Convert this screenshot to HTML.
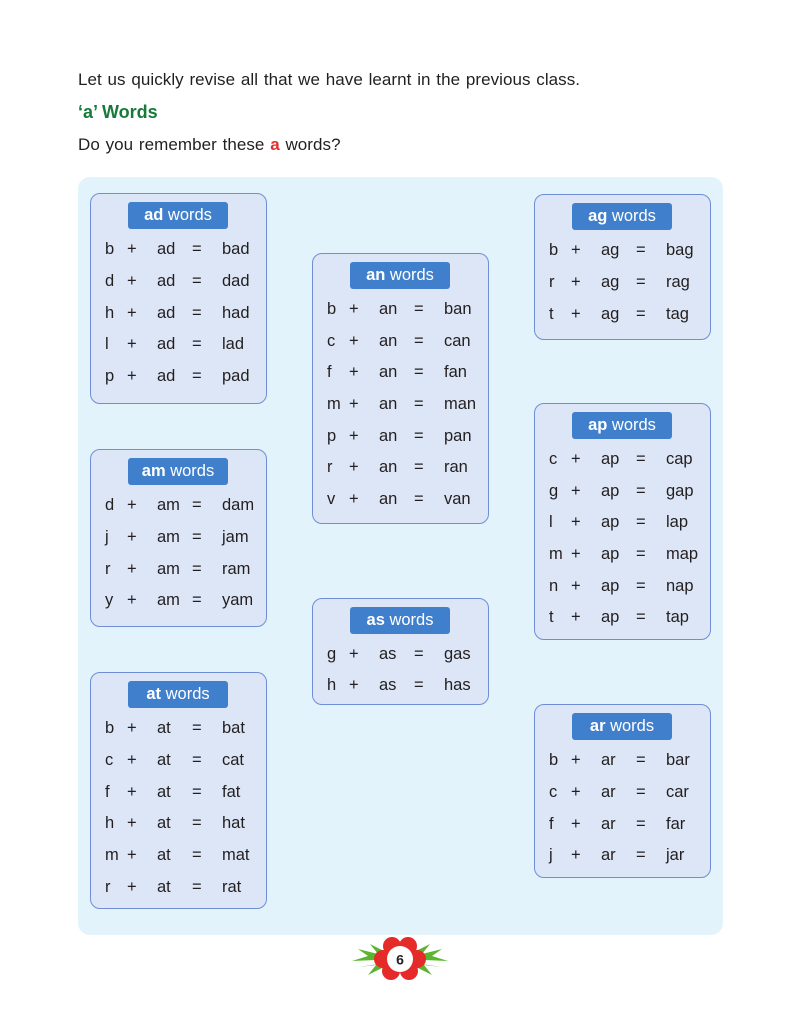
<!DOCTYPE html>
<html><head><meta charset="utf-8"><style>
*{margin:0;padding:0;box-sizing:border-box}
body{width:800px;height:1024px;background:#fff;font-family:"Liberation Sans",sans-serif;color:#231f20;position:relative;overflow:hidden}
.t{position:absolute;left:78px;font-size:17px;white-space:nowrap}
.panel{position:absolute;left:78px;top:177px;width:645px;height:758px;background:#e2f3fb;border-radius:12px}
.box{position:absolute;width:177px;background:#dce6f6;border:1.3px solid #6f8ed6;border-radius:10px}
.lab{position:absolute;left:37px;width:100px;height:27px;top:8px;background:#3f7fcc;color:#fff;border-radius:3px;text-align:center;font-size:16.5px;line-height:27px}
.lab b{font-weight:bold}
.r{position:absolute;left:0;width:100%;height:20px;font-size:16.5px;line-height:20px}
.r span{position:absolute}
.a{left:14px}.p{left:36px}.s{left:66px}.e{left:101px}.w{left:131px}
</style></head><body>
<div class="t" style="top:70px;letter-spacing:0.05px;word-spacing:1px">Let us quickly revise all that we have learnt in the previous class.</div>
<div class="t" style="top:102px;color:#167a3a;font-weight:bold;font-size:18px">‘a’ Words</div>
<div class="t" style="top:135px;letter-spacing:0.05px;word-spacing:1px">Do you remember these <b style="color:#e52d2d">a</b> words?</div>
<div class="panel"></div>

<div class="box" style="left:90px;top:193px;height:211px"><div class="lab"><b>ad</b> words</div>
<div class="r" style="top:45px"><span class="a">b</span><span class="p">+</span><span class="s">ad</span><span class="e">=</span><span class="w">bad</span></div>
<div class="r" style="top:77px"><span class="a">d</span><span class="p">+</span><span class="s">ad</span><span class="e">=</span><span class="w">dad</span></div>
<div class="r" style="top:109px"><span class="a">h</span><span class="p">+</span><span class="s">ad</span><span class="e">=</span><span class="w">had</span></div>
<div class="r" style="top:140px"><span class="a">l</span><span class="p">+</span><span class="s">ad</span><span class="e">=</span><span class="w">lad</span></div>
<div class="r" style="top:172px"><span class="a">p</span><span class="p">+</span><span class="s">ad</span><span class="e">=</span><span class="w">pad</span></div>
</div>

<div class="box" style="left:90px;top:449px;height:178px"><div class="lab"><b>am</b> words</div>
<div class="r" style="top:45px"><span class="a">d</span><span class="p">+</span><span class="s">am</span><span class="e">=</span><span class="w">dam</span></div>
<div class="r" style="top:77px"><span class="a">j</span><span class="p">+</span><span class="s">am</span><span class="e">=</span><span class="w">jam</span></div>
<div class="r" style="top:109px"><span class="a">r</span><span class="p">+</span><span class="s">am</span><span class="e">=</span><span class="w">ram</span></div>
<div class="r" style="top:140px"><span class="a">y</span><span class="p">+</span><span class="s">am</span><span class="e">=</span><span class="w">yam</span></div>
</div>

<div class="box" style="left:90px;top:672px;height:237px"><div class="lab"><b>at</b> words</div>
<div class="r" style="top:45px"><span class="a">b</span><span class="p">+</span><span class="s">at</span><span class="e">=</span><span class="w">bat</span></div>
<div class="r" style="top:77px"><span class="a">c</span><span class="p">+</span><span class="s">at</span><span class="e">=</span><span class="w">cat</span></div>
<div class="r" style="top:109px"><span class="a">f</span><span class="p">+</span><span class="s">at</span><span class="e">=</span><span class="w">fat</span></div>
<div class="r" style="top:140px"><span class="a">h</span><span class="p">+</span><span class="s">at</span><span class="e">=</span><span class="w">hat</span></div>
<div class="r" style="top:172px"><span class="a">m</span><span class="p">+</span><span class="s">at</span><span class="e">=</span><span class="w">mat</span></div>
<div class="r" style="top:204px"><span class="a">r</span><span class="p">+</span><span class="s">at</span><span class="e">=</span><span class="w">rat</span></div>
</div>

<div class="box" style="left:312px;top:253px;height:271px"><div class="lab"><b>an</b> words</div>
<div class="r" style="top:45px"><span class="a">b</span><span class="p">+</span><span class="s">an</span><span class="e">=</span><span class="w">ban</span></div>
<div class="r" style="top:77px"><span class="a">c</span><span class="p">+</span><span class="s">an</span><span class="e">=</span><span class="w">can</span></div>
<div class="r" style="top:108px"><span class="a">f</span><span class="p">+</span><span class="s">an</span><span class="e">=</span><span class="w">fan</span></div>
<div class="r" style="top:140px"><span class="a">m</span><span class="p">+</span><span class="s">an</span><span class="e">=</span><span class="w">man</span></div>
<div class="r" style="top:172px"><span class="a">p</span><span class="p">+</span><span class="s">an</span><span class="e">=</span><span class="w">pan</span></div>
<div class="r" style="top:203px"><span class="a">r</span><span class="p">+</span><span class="s">an</span><span class="e">=</span><span class="w">ran</span></div>
<div class="r" style="top:235px"><span class="a">v</span><span class="p">+</span><span class="s">an</span><span class="e">=</span><span class="w">van</span></div>
</div>

<div class="box" style="left:312px;top:598px;height:107px"><div class="lab"><b>as</b> words</div>
<div class="r" style="top:45px"><span class="a">g</span><span class="p">+</span><span class="s">as</span><span class="e">=</span><span class="w">gas</span></div>
<div class="r" style="top:76px"><span class="a">h</span><span class="p">+</span><span class="s">as</span><span class="e">=</span><span class="w">has</span></div>
</div>

<div class="box" style="left:534px;top:194px;height:146px"><div class="lab"><b>ag</b> words</div>
<div class="r" style="top:45px"><span class="a">b</span><span class="p">+</span><span class="s">ag</span><span class="e">=</span><span class="w">bag</span></div>
<div class="r" style="top:77px"><span class="a">r</span><span class="p">+</span><span class="s">ag</span><span class="e">=</span><span class="w">rag</span></div>
<div class="r" style="top:109px"><span class="a">t</span><span class="p">+</span><span class="s">ag</span><span class="e">=</span><span class="w">tag</span></div>
</div>

<div class="box" style="left:534px;top:403px;height:237px"><div class="lab"><b>ap</b> words</div>
<div class="r" style="top:45px"><span class="a">c</span><span class="p">+</span><span class="s">ap</span><span class="e">=</span><span class="w">cap</span></div>
<div class="r" style="top:77px"><span class="a">g</span><span class="p">+</span><span class="s">ap</span><span class="e">=</span><span class="w">gap</span></div>
<div class="r" style="top:108px"><span class="a">l</span><span class="p">+</span><span class="s">ap</span><span class="e">=</span><span class="w">lap</span></div>
<div class="r" style="top:140px"><span class="a">m</span><span class="p">+</span><span class="s">ap</span><span class="e">=</span><span class="w">map</span></div>
<div class="r" style="top:172px"><span class="a">n</span><span class="p">+</span><span class="s">ap</span><span class="e">=</span><span class="w">nap</span></div>
<div class="r" style="top:203px"><span class="a">t</span><span class="p">+</span><span class="s">ap</span><span class="e">=</span><span class="w">tap</span></div>
</div>

<div class="box" style="left:534px;top:704px;height:174px"><div class="lab"><b>ar</b> words</div>
<div class="r" style="top:45px"><span class="a">b</span><span class="p">+</span><span class="s">ar</span><span class="e">=</span><span class="w">bar</span></div>
<div class="r" style="top:77px"><span class="a">c</span><span class="p">+</span><span class="s">ar</span><span class="e">=</span><span class="w">car</span></div>
<div class="r" style="top:109px"><span class="a">f</span><span class="p">+</span><span class="s">ar</span><span class="e">=</span><span class="w">far</span></div>
<div class="r" style="top:140px"><span class="a">j</span><span class="p">+</span><span class="s">ar</span><span class="e">=</span><span class="w">jar</span></div>
</div>

<svg style="position:absolute;left:350px;top:935px" width="100" height="45" viewBox="0 0 100 45">
<g fill="#5cb531">
<path d="M50 24 L2 26 L18 21 L8 14 L28 19 L20 9 L38 18 Z"/>
<path d="M50 24 L98 26 L82 21 L92 14 L72 19 L80 9 L62 18 Z"/>
<path d="M50 26 L8 32 L26 30 L18 40 L38 30 Z"/>
<path d="M50 26 L92 32 L74 30 L82 40 L62 30 Z"/>
</g>
<g fill="#e52a2a">
<circle cx="42" cy="11" r="9"/><circle cx="58" cy="11" r="9"/>
<circle cx="33" cy="24" r="9"/><circle cx="67" cy="24" r="9"/>
<circle cx="41" cy="36" r="9"/><circle cx="59" cy="36" r="9"/>
</g>
<circle cx="50" cy="24" r="13" fill="#fff"/>
<text x="50" y="29.5" font-size="14" font-weight="bold" text-anchor="middle" fill="#222" font-family="Liberation Sans,sans-serif">6</text>
</svg>
</body></html>
